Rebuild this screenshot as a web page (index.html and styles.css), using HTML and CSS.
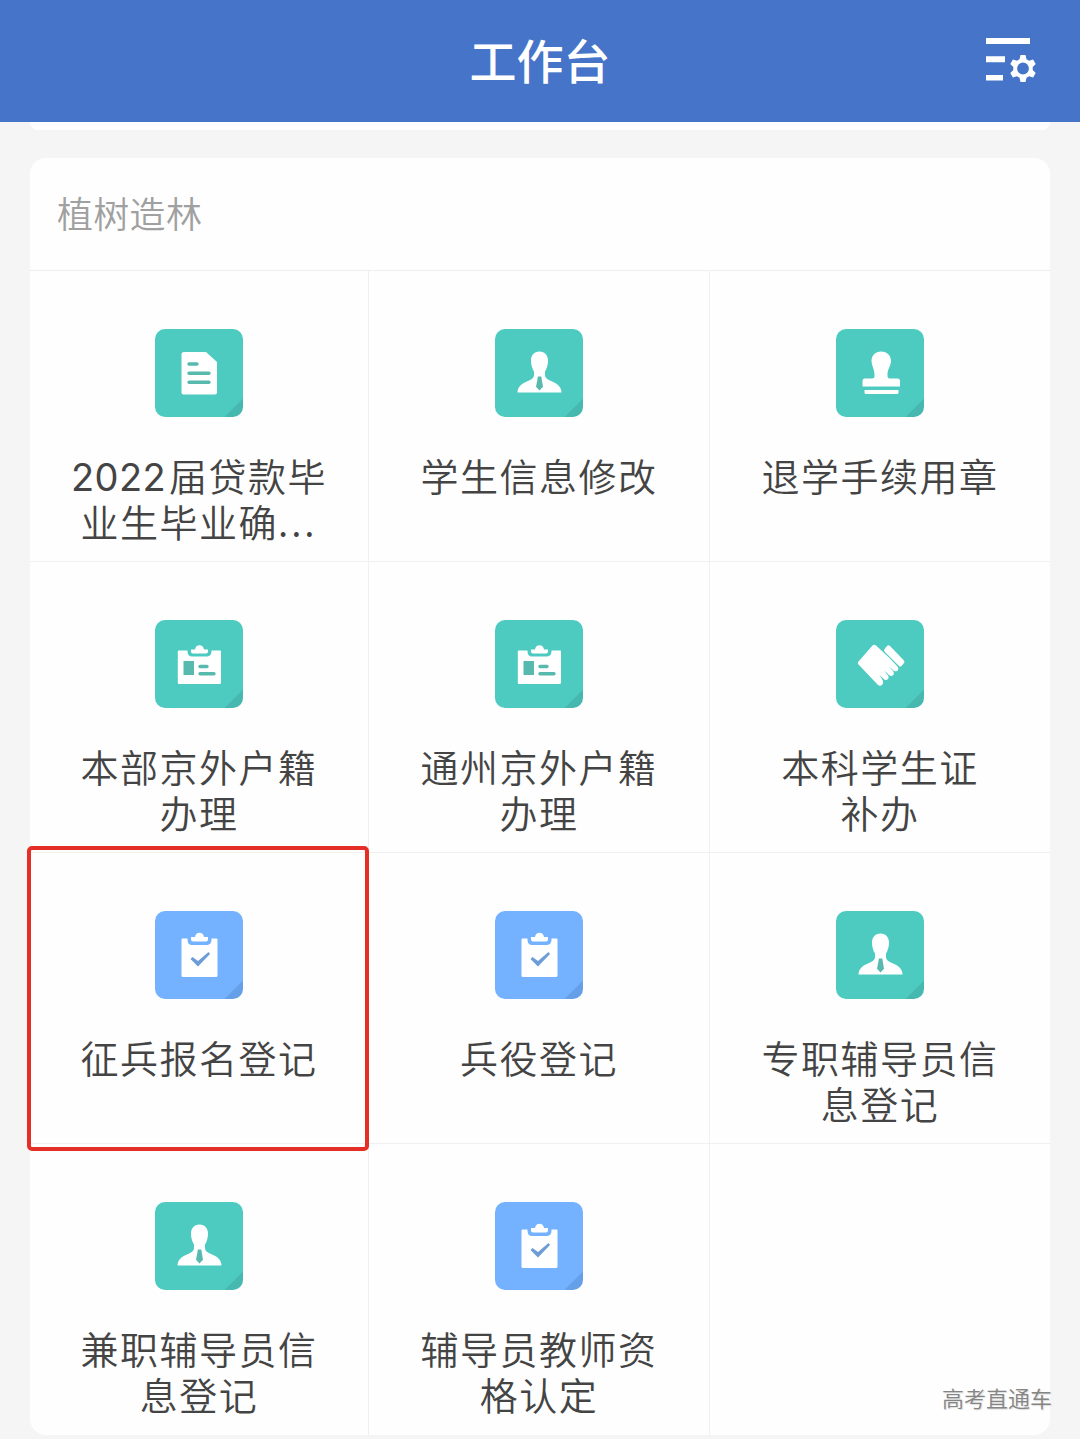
FILE: index.html
```html
<!DOCTYPE html>
<html lang="zh-CN">
<head>
<meta charset="utf-8">
<title>工作台</title>
<link rel="stylesheet" href="styles.css">
</head>
<body>
<svg class="defs" width="0" height="0" aria-hidden="true">
  <symbol id="doc" viewBox="0 0 88 88">
    <path fill="#fff" d="M29 23H51L62 33V63.500Q62 65.500 60 65.500H28.500Q26.500 65.500 26.500 63.500V25.500Q26.500 23 29 23Z"/>
    <path class="cut" d="M34 35h8M34 44.200h20M34 53.200h20" stroke-width="3.400"/>
  </symbol>
  <symbol id="person" viewBox="0 0 88 88">
    <path fill="#fff" d="M44.500 22.500C50 22.500 53 26.500 53 31.500C53 36 51.800 39.500 50 42.500V45.500C50 49 52 50.200 55.500 51.700C61.500 54.200 66 57 66.500 63Q66.500 63.500 66 63.500H23Q22.500 63.500 22.500 63C23 57 27.500 54.200 33.500 51.700C37 50.200 39 49 39 45.500V42.500C37.200 39.500 36 36 36 31.500C36 26.500 39 22.500 44.500 22.500Z"/>
    <path class="cutfill" d="M42.800 47.500h3.500l.5 3.300l1.200 7l-3.500 3.700l-3.500-3.700l1.400-7Z"/>
  </symbol>
  <symbol id="stamp" viewBox="0 0 88 88">
    <path fill="#fff" d="M45 22.500C51 22.500 55 26.600 55 32C55 36.500 51.500 40.500 51.500 45V47Q51.500 49.500 54 49.500H61.500Q64 49.500 64 52V57.500H26.500V52Q26.500 49.500 29 49.500H36Q38.500 49.500 38.500 47V45C38.500 40.500 35.500 36.500 35.500 32C35.500 26.600 39.500 22.500 45 22.500ZM28.500 61H62.500V63.500Q62.500 65 61 65H30Q28.500 65 28.500 63.500Z"/>
  </symbol>
  <symbol id="idcard" viewBox="0 0 88 88">
    <path fill="#fff" d="M24 30.500H32.500C32.500 35 34 36.500 38 36.500H50.500C55 36.500 56.500 35 56.500 30.500H65Q66 30.500 66 31.500V62.500Q66 64 64.500 64H24Q22.800 64 22.800 62.500V31.500Q22.800 30.500 24 30.500Z"/>
    <path fill="#fff" d="M36 29.500H40C40.500 23.700 48.500 23.700 49 29.500H53V31.500Q53 33.500 51 33.500H38Q36 33.500 36 31.500Z"/>
    <path class="cutfill" d="M28.500 41h10.500v14h-10.500z"/>
    <path class="cut" d="M45 46.500h7M45 53.700h14" stroke-width="3.400"/>
  </symbol>
  <symbol id="hand" viewBox="0 0 88 88">
    <path fill="#fff" d="M36.500 25.500Q38 24.200 40 25.500L53.500 38L61.500 46.500C64 49.500 60.500 53 57.500 50.500L52.500 46L57 51C59.500 54.500 56 57.500 53 55L48 50.500L52 55.500C54 58.500 50.500 61.500 48 59.200L43.500 55L46.500 60C48.500 63.500 45 67.500 42 65L22.500 44.500Q21 43 22.500 41.500Z"/>
    <path fill="#fff" d="M51 26Q52.500 24.500 54 26L68 40.500Q69 42 68 43L65.500 46Q64.300 47 63 46L48.500 31.500Q47.500 30 48.500 29Z"/>
  </symbol>
  <symbol id="task" viewBox="0 0 88 88">
    <path fill="#fff" d="M27.500 27.500H32.500C32.500 32.500 34 34 38 34H50.500C55 34 56.500 32.500 56.500 27.500H61.500Q62.500 27.500 62.500 28.500V64.500Q62.500 66 61 66H28Q26.500 66 26.500 64.500V28.500Q26.500 27.500 27.500 27.500Z"/>
    <path fill="#fff" d="M36 26H40C40.500 20.200 48.500 20.200 49 26H53V28.500Q53 30.500 51 30.500H38Q36 30.500 36 28.500Z"/>
    <path class="cutfill" d="M35.500 48L37.500 46L43 50L53.500 41L55 43L43 55.500Z"/>
  </symbol>
</svg>

<header class="topbar">
  <h1 class="title">工作台</h1>
  <svg class="settings" width="54" height="48" viewBox="0 0 54 48" fill="#fff">
    <path d="M3 1h44v6H3zM3 19.200h19v6H3zM3 38h17v5.500H3z"/>
    <path fill-rule="evenodd" d="M37.500 18h5l1 4.200l2.600 1.500l4-1.200l2.600 4.400l-3 3v3.200l3 3l-2.600 4.400l-4-1.200l-2.600 1.500l-1 4.200h-5l-1-4.200l-2.600-1.500l-4 1.200l-2.600-4.400l3-3v-3.200l-3-3l2.600-4.400l4 1.200l2.600-1.500ZM40 25.600a5.900 5.900 0 1 0 0 11.800a5.900 5.900 0 1 0 0-11.800Z"/>
  </svg>
</header>

<main class="content">
  <div class="previous-card"></div>
  <section class="card">
    <h2 class="section-title">植树造林</h2>
    <div class="grid">
      <div class="cell"><div class="icon"><svg><use href="#doc"/></svg></div><p class="label"><span class="year">2022</span>届贷款毕<br>业生毕业确<span class="dots">...</span></p></div>
      <div class="cell"><div class="icon"><svg><use href="#person"/></svg></div><p class="label">学生信息修改</p></div>
      <div class="cell"><div class="icon"><svg><use href="#stamp"/></svg></div><p class="label">退学手续用章</p></div>
      <div class="cell"><div class="icon"><svg><use href="#idcard"/></svg></div><p class="label">本部京外户籍<br>办理</p></div>
      <div class="cell"><div class="icon"><svg><use href="#idcard"/></svg></div><p class="label">通州京外户籍<br>办理</p></div>
      <div class="cell"><div class="icon"><svg><use href="#hand"/></svg></div><p class="label">本科学生证<br>补办</p></div>
      <div class="cell marked"><div class="icon blue"><svg><use href="#task"/></svg></div><p class="label">征兵报名登记</p></div>
      <div class="cell"><div class="icon blue"><svg><use href="#task"/></svg></div><p class="label">兵役登记</p></div>
      <div class="cell"><div class="icon"><svg><use href="#person"/></svg></div><p class="label">专职辅导员信<br>息登记</p></div>
      <div class="cell"><div class="icon"><svg><use href="#person"/></svg></div><p class="label">兼职辅导员信<br>息登记</p></div>
      <div class="cell"><div class="icon blue"><svg><use href="#task"/></svg></div><p class="label">辅导员教师资<br>格认定</p></div>
      <div class="cell"></div>
    </div>
  </section>
</main>
<div class="watermark">高考直通车</div>
</body>
</html>
```
FILE: styles.css
```css
*,
*::after {
  box-sizing: border-box;
  margin: 0;
  padding: 0;
}

body {
  position: relative;
  height: 1439px;
  overflow: hidden;
  background: #f5f5f5;
  color: #444;
  font-family: "Noto Sans CJK SC", sans-serif;
}

.defs {
  position: absolute;
}

.topbar {
  display: grid;
  grid-template-columns: 1fr auto 1fr;
  align-items: center;
  height: 122px;
  padding-right: 43px;
  padding-left: 43px;
  background: #4674c9;
  color: #fff;
}

.title {
  grid-column: 2;
  padding-bottom: 4px;
  font-size: 47px;
  font-weight: 500;
  line-height: 60px;
}

.settings {
  justify-self: end;
}

.content {
  padding: 0 30px;
}

.previous-card {
  height: 8px;
  margin-bottom: 28px;
  border-radius: 0 0 16px 16px;
  background: #fff;
}

.card {
  border-radius: 16px;
  background: #fefefe;
}

.section-title {
  height: 113px;
  padding-left: 27px;
  border-bottom: 1px solid #eee;
  color: #a0a0a0;
  font-size: 36px;
  font-weight: 350;
  letter-spacing: 0.3px;
  line-height: 109px;
}

.grid {
  display: grid;
  grid-template-columns: 339px 341px 340px;
  grid-auto-rows: 291px;
}

.cell {
  position: relative;
  display: flex;
  flex-direction: column;
  align-items: center;
  gap: 34.500px;
  padding-top: 58.400px;
  border-right: 1px solid #f0f0f0;
  border-bottom: 1px solid #f0f0f0;
}

.cell:nth-child(3n) {
  border-right: 0;
}

.cell:nth-last-child(-n + 3) {
  border-bottom: 0;
}

.icon {
  --tile: #4dcbc1;
  --fold: #46b8af;
  --cut: #58b9ae;
  flex: none;
  width: 88px;
  height: 88px;
  border-radius: 10px;
  background: linear-gradient(135deg, var(--tile) 89%, var(--fold) 90%);
}

.icon.blue {
  --tile: #74b2ff;
  --fold: #659fe8;
  --cut: #6d9cd6;
}

.icon svg {
  display: block;
  width: 88px;
  height: 88px;
}

.cut {
  fill: none;
  stroke: var(--cut);
  stroke-linecap: round;
}

.cutfill {
  fill: var(--cut);
}

.label {
  font-size: 38px;
  font-weight: 350;
  letter-spacing: 1.500px;
  line-height: 46px;
  text-align: center;
  white-space: nowrap;
}

.year {
  margin-right: 3px;
  font-family: Inter, sans-serif;
  font-weight: 370;
  letter-spacing: 0.400px;
  line-height: 0;
}

.dots {
  letter-spacing: 3px;
}

.marked {
  z-index: 1;
}

.marked::after {
  content: "";
  position: absolute;
  top: -7px;
  left: -3px;
  width: 342px;
  height: 305px;
  border: 4px solid #e32f25;
  border-radius: 5px;
}

.watermark {
  position: absolute;
  right: 28px;
  bottom: 26px;
  color: #858585;
  font-size: 22px;
  font-weight: 350;
  line-height: 32px;
  text-shadow: 1px 1px 1px #ddd;
}
```
